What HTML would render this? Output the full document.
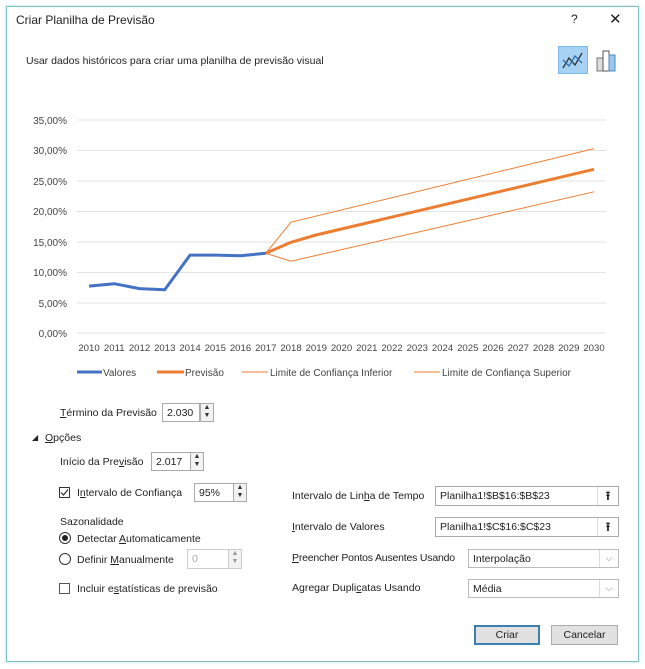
<!DOCTYPE html>
<html><head><meta charset="utf-8"><style>
body{margin:0;width:645px;height:669px;background:#fff;font-family:"Liberation Sans",sans-serif;font-size:10.5px;color:#222;position:relative;overflow:hidden}
.a{position:absolute;white-space:nowrap}
.dlg{position:absolute;left:6px;top:6px;width:631px;height:654px;border:1px solid #7cc0c4;box-shadow:0 0 3px #bde0e2}
.box{position:absolute;border:1px solid #aaa;background:#fff;box-sizing:border-box;padding:3px 4px;font-size:10.5px}
.spin{position:absolute;width:14px;border:1px solid #aaa;box-sizing:border-box;background:#f2f2f2;font-size:7px;line-height:8px;text-align:center;color:#333}
.dd{position:absolute;right:0;top:0;width:18px;height:100%;border-left:1px solid #ddd;color:#777;text-align:center;font-size:9px;line-height:16px}
.btn{position:absolute;height:20px;border:1px solid #adadad;background:#e1e1e1;box-sizing:border-box;text-align:center;line-height:18px}
.cb{position:absolute;width:11px;height:11px;border:1px solid #333;box-sizing:border-box;background:#fff}
.rd{position:absolute;width:12px;height:12px;border:1px solid #333;border-radius:50%;box-sizing:border-box;background:#fff}
u{text-decoration:underline}
</style></head><body>
<div class="dlg"></div>
<div class="a" style="left:16px;top:13px;font-size:12px">Criar Planilha de Previsão</div>
<div class="a" style="left:571px;top:12px;font-size:12px">?</div>
<div class="a" style="left:609px;top:10px;font-size:15px">✕</div>
<div class="a" style="left:26px;top:55px">Usar dados históricos para criar uma planilha de previsão visual</div>
<svg class="a" style="left:558px;top:46px" width="60" height="30">
<rect x="0.5" y="0.5" width="29" height="27" fill="#a8d2f4" stroke="#7fb7e5"/>
<polyline points="5,22 11,12 17,19 24,7" fill="none" stroke="#333" stroke-width="1.3"/>
<polyline points="5,14 11,20 17,10 24,17" fill="none" stroke="#2b6fb3" stroke-width="1.3"/>
<rect x="39" y="12" width="6" height="13" fill="#ddd" stroke="#777"/>
<rect x="45" y="5" width="6" height="20" fill="#fff" stroke="#555"/>
<rect x="51" y="9" width="6" height="16" fill="#9cc8ec" stroke="#4a88c2"/>
</svg>
<svg class="a" style="left:0;top:0" width="645" height="400" font-family="Liberation Sans" font-size="10" fill="#444">
<g stroke="#e3e3e3" stroke-width="1">
<line x1="77" x2="606" y1="120" y2="120"/><line x1="77" x2="606" y1="150.5" y2="150.5"/><line x1="77" x2="606" y1="181" y2="181"/><line x1="77" x2="606" y1="211.5" y2="211.5"/><line x1="77" x2="606" y1="242" y2="242"/><line x1="77" x2="606" y1="272.5" y2="272.5"/><line x1="77" x2="606" y1="303" y2="303"/><line x1="77" x2="606" y1="333" y2="333"/>
</g>
<g text-anchor="end">
<text x="67" y="124">35,00%</text><text x="67" y="154">30,00%</text><text x="67" y="185">25,00%</text><text x="67" y="215">20,00%</text><text x="67" y="246">15,00%</text><text x="67" y="276">10,00%</text><text x="67" y="307">5,00%</text><text x="67" y="337">0,00%</text>
</g>
<g text-anchor="middle" font-size="9.6">
<text x="89" y="351">2010</text><text x="114.25" y="351">2011</text><text x="139.5" y="351">2012</text><text x="164.75" y="351">2013</text><text x="190" y="351">2014</text><text x="215.25" y="351">2015</text><text x="240.5" y="351">2016</text><text x="265.75" y="351">2017</text><text x="291" y="351">2018</text><text x="316.25" y="351">2019</text><text x="341.5" y="351">2020</text><text x="366.75" y="351">2021</text><text x="392" y="351">2022</text><text x="417.25" y="351">2023</text><text x="442.5" y="351">2024</text><text x="467.75" y="351">2025</text><text x="493" y="351">2026</text><text x="518.25" y="351">2027</text><text x="543.5" y="351">2028</text><text x="568.75" y="351">2029</text><text x="594" y="351">2030</text>
</g>
<polyline points="265.75,253.3 291,222.2 594,148.6" fill="none" stroke="#ed7d31" stroke-width="1"/>
<polyline points="265.75,253.3 291,261.2 594,191.8" fill="none" stroke="#ed7d31" stroke-width="1"/>
<polyline points="265.75,253.3 291,242.3 316,235 594,169.3" fill="none" stroke="#ed7d31" stroke-width="3"/>
<polyline points="89,286.1 114.25,283.7 139.5,288.6 164.75,289.8 190,255.1 215.25,255.1 240.5,255.7 265.75,253.3" fill="none" stroke="#4472c4" stroke-width="3" stroke-linejoin="round"/>
<line x1="77" x2="102" y1="372" y2="372" stroke="#4472c4" stroke-width="3"/><text x="103" y="376">Valores</text>
<line x1="157" x2="184" y1="372" y2="372" stroke="#ed7d31" stroke-width="3"/><text x="185" y="376">Previsão</text>
<line x1="242" x2="268" y1="372" y2="372" stroke="#ed7d31"/><text x="270" y="376">Limite de Confiança Inferior</text>
<line x1="414" x2="440" y1="372" y2="372" stroke="#ed7d31"/><text x="442" y="376">Limite de Confiança Superior</text>
</svg>

<div class="a" style="left:60px;top:407px"><u>T</u>érmino da Previsão</div>
<div class="box" style="left:162px;top:403px;width:38px;height:19px">2.030</div>
<div class="spin" style="left:200px;top:403px;height:19px">▲<br>▼</div>
<div class="a" style="left:32px;top:433px;font-size:8px">◢</div>
<div class="a" style="left:45px;top:432px"><u>O</u>pções</div>
<div class="a" style="left:60px;top:456px">Início da Pre<u>v</u>isão</div>
<div class="box" style="left:151px;top:452px;width:40px;height:19px">2.017</div>
<div class="spin" style="left:190px;top:452px;height:19px">▲<br>▼</div>
<div class="cb" style="left:59px;top:487px"></div>
<svg class="a" style="left:59px;top:487px" width="11" height="11"><polyline points="2,5.5 4.5,8 9,2.5" fill="none" stroke="#222" stroke-width="1.1"/></svg>
<div class="a" style="left:77px;top:487px">I<u>n</u>tervalo de Confiança</div>
<div class="box" style="left:194px;top:483px;width:40px;height:19px">95%</div>
<div class="spin" style="left:233px;top:483px;height:19px">▲<br>▼</div>
<div class="a" style="left:60px;top:516px">Sazonalidade</div>
<div class="rd" style="left:59px;top:532px"></div><div class="a" style="left:62px;top:535px;width:6px;height:6px;border-radius:50%;background:#222"></div>
<div class="a" style="left:77px;top:533px">Detectar <u>A</u>utomaticamente</div>
<div class="rd" style="left:59px;top:553px"></div>
<div class="a" style="left:77px;top:554px">Definir <u>M</u>anualmente</div>
<div class="box" style="left:187px;top:549px;width:42px;height:20px;color:#aaa;border-color:#ccc">0</div>
<div class="spin" style="left:228px;top:549px;height:20px;border-color:#ccc;color:#999">▲<br>▼</div>
<div class="cb" style="left:59px;top:583px;border-color:#555"></div>
<div class="a" style="left:77px;top:583px">Incluir e<u>s</u>tatísticas de previsão</div>

<div class="a" style="left:292px;top:490px">Intervalo de Lin<u>h</u>a de Tempo</div>
<div class="box" style="left:435px;top:486px;width:184px;height:20px">Planilha1!$B$16:$B$23<span class="dd" style="width:20px;color:#222;font-size:12px;line-height:18px;font-weight:bold">⭱</span></div>
<div class="a" style="left:292px;top:521px"><u>I</u>ntervalo de Valores</div>
<div class="box" style="left:435px;top:517px;width:184px;height:20px">Planilha1!$C$16:$C$23<span class="dd" style="width:20px;color:#222;font-size:12px;line-height:18px;font-weight:bold">⭱</span></div>
<div class="a" style="left:292px;top:552px;letter-spacing:-0.2px"><u>P</u>reencher Pontos Ausentes Usando</div>
<div class="box" style="left:468px;top:549px;width:151px;height:19px;border-color:#bbb">Interpolação<span class="dd">⌵</span></div>
<div class="a" style="left:292px;top:582px">Agregar Dupli<u>c</u>atas Usando</div>
<div class="box" style="left:468px;top:579px;width:151px;height:19px;border-color:#bbb">Média<span class="dd">⌵</span></div>

<div class="btn" style="left:474px;top:625px;width:66px;border:2px solid #3c7fb1;line-height:16px">Criar</div>
<div class="btn" style="left:551px;top:625px;width:67px">Cancelar</div>
</body></html>
